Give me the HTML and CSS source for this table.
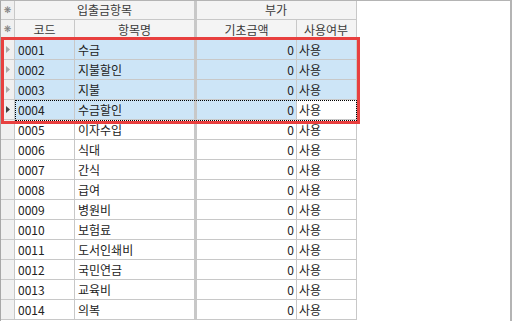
FILE: index.html
```html
<!DOCTYPE html>
<html lang="ko">
<head>
<meta charset="utf-8">
<link rel="stylesheet" href="styles.css">
</head>
<body>
<div class="window">
  <div class="grid">
    <div class="row head head1">
      <div class="cell rh corner">❋</div>
      <div class="cell hc span2">입출금항목</div>
      <div class="cell hc span2 last">부가</div>
    </div>
    <div class="row head">
      <div class="cell rh corner">❋</div>
      <div class="cell hc">코드</div>
      <div class="cell hc thick">항목명</div>
      <div class="cell hc">기초금액</div>
      <div class="cell hc last">사용여부</div>
    </div>

    <div class="row sel">
      <div class="cell rh"><svg class="tri" viewBox="0 0 4 7" width="4" height="7"><path d="M0 0L4 3.5L0 7Z"/></svg></div>
      <div class="cell">0001</div><div class="cell thick">수금</div><div class="cell num">0</div><div class="cell last">사용</div>
    </div>
    <div class="row sel">
      <div class="cell rh"><svg class="tri" viewBox="0 0 4 7" width="4" height="7"><path d="M0 0L4 3.5L0 7Z"/></svg></div>
      <div class="cell">0002</div><div class="cell thick">지불할인</div><div class="cell num">0</div><div class="cell last">사용</div>
    </div>
    <div class="row sel">
      <div class="cell rh"><svg class="tri" viewBox="0 0 4 7" width="4" height="7"><path d="M0 0L4 3.5L0 7Z"/></svg></div>
      <div class="cell">0003</div><div class="cell thick">지불</div><div class="cell num">0</div><div class="cell last">사용</div>
    </div>
    <div class="row sel current">
      <div class="cell rh"><svg class="tri" viewBox="0 0 4 7" width="4" height="7"><path d="M0 0L4 3.5L0 7Z"/></svg></div>
      <div class="cell">0004</div><div class="cell thick">수금할인</div><div class="cell num">0</div><div class="cell last active">사용</div>
    </div>
    <div class="row"><div class="cell rh"></div><div class="cell">0005</div><div class="cell thick">이자수입</div><div class="cell num">0</div><div class="cell last">사용</div></div>
    <div class="row"><div class="cell rh"></div><div class="cell">0006</div><div class="cell thick">식대</div><div class="cell num">0</div><div class="cell last">사용</div></div>
    <div class="row"><div class="cell rh"></div><div class="cell">0007</div><div class="cell thick">간식</div><div class="cell num">0</div><div class="cell last">사용</div></div>
    <div class="row"><div class="cell rh"></div><div class="cell">0008</div><div class="cell thick">급여</div><div class="cell num">0</div><div class="cell last">사용</div></div>
    <div class="row"><div class="cell rh"></div><div class="cell">0009</div><div class="cell thick">병원비</div><div class="cell num">0</div><div class="cell last">사용</div></div>
    <div class="row"><div class="cell rh"></div><div class="cell">0010</div><div class="cell thick">보험료</div><div class="cell num">0</div><div class="cell last">사용</div></div>
    <div class="row"><div class="cell rh"></div><div class="cell">0011</div><div class="cell thick">도서인쇄비</div><div class="cell num">0</div><div class="cell last">사용</div></div>
    <div class="row"><div class="cell rh"></div><div class="cell">0012</div><div class="cell thick">국민연금</div><div class="cell num">0</div><div class="cell last">사용</div></div>
    <div class="row"><div class="cell rh"></div><div class="cell">0013</div><div class="cell thick">교육비</div><div class="cell num">0</div><div class="cell last">사용</div></div>
    <div class="row"><div class="cell rh"></div><div class="cell">0014</div><div class="cell thick">의복</div><div class="cell num">0</div><div class="cell last">사용</div></div>

    <div class="focus-rect"></div>
    <div class="highlight"></div>
  </div>
</div>
</body>
</html>
```

FILE: styles.css
```css
html, body {
  margin: 0;
  padding: 0;
  background: #ffffff;
}

body {
  font-family: "Liberation Sans Narrow", "Noto Sans CJK KR", sans-serif;
  font-size: 12px;
  color: #222222;
}

.window {
  box-sizing: border-box;
  width: 512px;
  height: 321px;
  border-top: 1px solid #b4b4b4;
  border-left: 1px solid #a8a8a8;
  border-right: 2px solid #b4b4b4;
  overflow: hidden;
  background: #ffffff;
}

.grid {
  position: relative;
  display: grid;
  grid-template-columns: 14px 60px 122px 100px 60px;
  grid-template-rows: 19px;
  grid-auto-rows: 20px;
  width: 356px;
}

.row {
  display: contents;
}

.cell {
  box-sizing: border-box;
  border-right: 1px solid #c8c8c8;
  border-bottom: 1px solid #c8c8c8;
  padding: 0 3px;
  line-height: 19px;
  white-space: nowrap;
  overflow: hidden;
  background: #ffffff;
}

.cell.thick {
  border-right: 3px solid #c8c8c8;
}

.cell.num {
  text-align: right;
  padding-right: 2px;
}

.cell.last {
  padding-left: 2px;
}

.head .cell {
  background: #f4f4f4;
  color: #3a3a3a;
}

.head1 .cell {
  line-height: 18px;
}

.hc {
  text-align: center;
}

.span2 {
  grid-column: span 2;
}

.head1 .span2:not(.last) {
  border-right: 3px solid #c8c8c8;
}

.rh {
  padding: 0;
  background: #f0f0f0;
  display: flex;
  align-items: center;
  justify-content: center;
}

.head .rh.corner {
  font-family: "DejaVu Sans", sans-serif;
  font-size: 9px;
  color: #7a7a7a;
  background: #f0f0f0;
}

.row:not(.head) .rh {
  justify-content: flex-start;
  padding-left: 5px;
}

.tri {
  display: block;
  fill: #a8a8a8;
}

.current .tri {
  fill: #404040;
}

.sel .cell:not(.rh) {
  background: #cde5f7;
}

.sel .cell.active {
  background: #ffffff;
}

.focus-rect {
  position: absolute;
  left: 14px;
  top: 99px;
  width: 342px;
  height: 21px;
  box-sizing: border-box;
  border: 1px dotted #000000;
  pointer-events: none;
}

.highlight {
  position: absolute;
  left: 0px;
  top: 36px;
  width: 359px;
  height: 87px;
  box-sizing: border-box;
  border: 3px solid #e8403f;
  pointer-events: none;
}
```
